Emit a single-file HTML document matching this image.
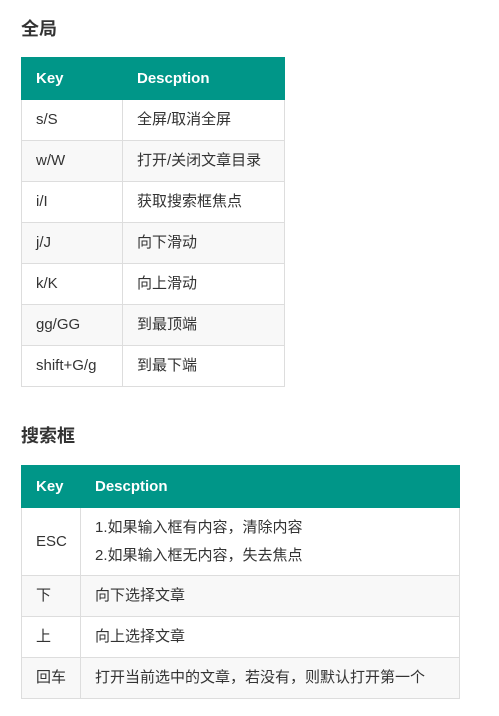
<!DOCTYPE html>
<html><head><meta charset="utf-8"><style>
body{margin:0;background:#fff;font-family:"Liberation Sans","Noto Sans CJK SC",sans-serif;color:#333;width:499px;height:716px;position:relative;overflow:hidden}
h3{position:absolute;left:21px;margin:0;font-size:18px;font-weight:bold;color:#333;line-height:24px}
table{position:absolute;left:21px;border-collapse:collapse;font-size:15px}
th{background:#009688;color:#fff;text-align:left;font-weight:bold;height:42px;padding:0 0 0 14px;box-sizing:border-box;border:1px solid #009688}
td{border:1px solid #ddd;height:41px;padding:0 0 0 14px;box-sizing:border-box;line-height:28px;background:#fff}
tr:nth-child(odd) td{background:#f8f8f8}
</style></head><body>
<h3 style="top:17px">全局</h3>
<table style="top:57px;width:264px">
<tr><th style="width:101px">Key</th><th>Descption</th></tr>
<tr><td>s/S</td><td>全屏/取消全屏</td></tr>
<tr><td>w/W</td><td>打开/关闭文章目录</td></tr>
<tr><td>i/I</td><td>获取搜索框焦点</td></tr>
<tr><td>j/J</td><td>向下滑动</td></tr>
<tr><td>k/K</td><td>向上滑动</td></tr>
<tr><td>gg/GG</td><td>到最顶端</td></tr>
<tr><td>shift+G/g</td><td>到最下端</td></tr>
</table>
<h3 style="top:424px">搜索框</h3>
<table style="top:465px;width:439px">
<tr><th style="width:59px">Key</th><th>Descption</th></tr>
<tr><td style="height:68px">ESC</td><td>1.如果输入框有内容，清除内容<br>2.如果输入框无内容，失去焦点</td></tr>
<tr><td>下</td><td>向下选择文章</td></tr>
<tr><td>上</td><td>向上选择文章</td></tr>
<tr><td>回车</td><td>打开当前选中的文章，若没有，则默认打开第一个</td></tr>
</table>
</body></html>
